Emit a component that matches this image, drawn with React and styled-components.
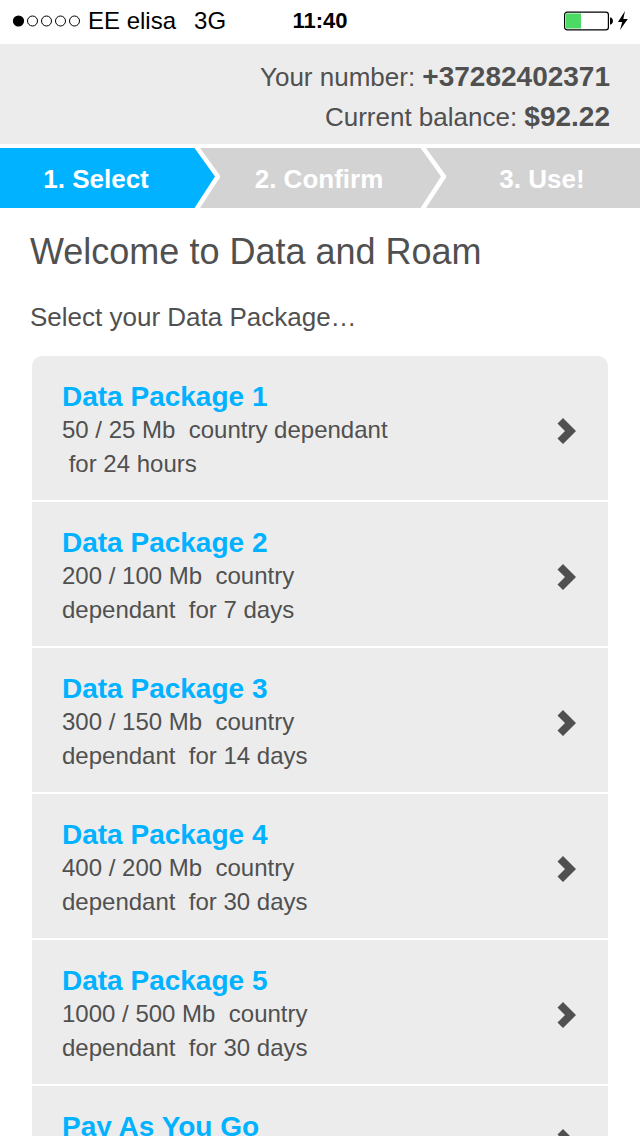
import React from "react";
import styled, { createGlobalStyle } from "styled-components";

const blue = "#00b2ff";
const ink = "#505050";
const panel = "#ececec";
const idle = "#d3d3d3";

const GlobalStyle = createGlobalStyle`
  *, *::before, *::after { box-sizing: border-box; }
  body {
    margin: 0;
    background: #fff;
    color: ${ink};
    font-family: "Liberation Sans", Arial, Helvetica, sans-serif;
  }
  h1, h2, p, ul, ol { margin: 0; padding: 0; font-weight: normal; }
  ul, ol { list-style: none; }
  svg { display: block; flex: none; }
`;

const Screen = styled.div`
  height: 100vh;
  overflow: hidden;
`;

const StatusBar = styled.div`
  display: grid;
  grid-template-columns: 1fr auto 1fr;
  align-items: center;
  height: 44px;
  padding: 0 12px 3px;
  color: #000;
  font-size: 24px;
  line-height: 40px;
`;

const Carrier = styled.div`
  display: flex;
  align-items: center;
  gap: 8px;
`;

const Network = styled.span`
  padding-left: 10px;
`;

const Clock = styled.time`
  font-size: 22px;
  font-weight: bold;
`;

const Power = styled.div`
  display: flex;
  justify-content: flex-end;
`;

const Account = styled.header`
  padding: 13px 30px 7px;
  background: ${panel};
  font-size: 26px;
  line-height: 40px;
  text-align: right;

  strong {
    font-size: 28px;
  }
`;

const Steps = styled.ol`
  display: flex;
  margin-top: 4px;
  background: ${idle};
`;

const Step = styled.li`
  display: flex;
  flex: ${(p) => p.$grow} 1 0;
`;

const StepLabel = styled.span`
  flex: 1;
  padding: 2px 2px 0 0;
  background: ${(p) => (p.$active ? blue : idle)};
  color: #fff;
  font-size: 26px;
  font-weight: bold;
  line-height: 58px;
  text-align: center;
`;

const Main = styled.main`
  padding: 20px 30px 0;
`;

const Title = styled.h1`
  font-size: 36px;
  line-height: 48px;
`;

const Lead = styled.p`
  margin-top: 21px;
  font-size: 26px;
  line-height: 40px;
`;

const PackageList = styled.ul`
  display: flex;
  flex-direction: column;
  gap: 2px;
  margin: 19px 2px 0;
  border-radius: 10px;
  overflow: hidden;
`;

const PackageLink = styled.a`
  display: flex;
  align-items: center;
  justify-content: space-between;
  min-height: 106px;
  padding: 25px 32px 19px 30px;
  background: ${panel};
  color: inherit;
  text-decoration: none;
`;

const PackageText = styled.div`
  align-self: flex-start;
  max-width: 340px;
  font-size: 24px;
  line-height: 34px;
`;

const PackageName = styled.h2`
  color: ${blue};
  font-size: 28px;
  font-weight: bold;
  line-height: 32px;
`;

const packages = [
  { name: "Data Package 1", detail: "50 / 25 Mb \u00a0country dependant \u00a0for 24 hours" },
  { name: "Data Package 2", detail: "200 / 100 Mb \u00a0country dependant \u00a0for 7 days" },
  { name: "Data Package 3", detail: "300 / 150 Mb \u00a0country dependant \u00a0for 14 days" },
  { name: "Data Package 4", detail: "400 / 200 Mb \u00a0country dependant \u00a0for 30 days" },
  { name: "Data Package 5", detail: "1000 / 500 Mb \u00a0country dependant \u00a0for 30 days" },
  { name: "Pay As You Go" },
];

const SignalDots = () => (
  <svg width="68" height="12" viewBox="0 0 68 12" aria-hidden="true">
    <circle cx="6.5" cy="6" r="5.6" fill="#000" />
    {[20.5, 34.5, 48.5, 62.5].map((x) => (
      <circle key={x} cx={x} cy="6" r="5" fill="none" stroke="#000" />
    ))}
  </svg>
);

const Battery = () => (
  <svg width="64" height="20" viewBox="0 0 64 20" aria-hidden="true">
    <rect x="0.6" y="1.1" width="43.8" height="17.8" rx="2.6" fill="#fff" stroke="#000" strokeWidth="1.2" />
    <rect x="2" y="2.500" width="15" height="15" fill="#4cd964" />
    <path d="M46 6.500h1q2 1 2 3.500t-2 3.500h-1z" fill="#000" />
    <path d="M61 0L54 11h4.200L56 19L63.800 8h-4.500z" fill="#000" />
  </svg>
);

const StepArrow = ({ active }) => (
  <svg width="26" height="60" viewBox="0 0 26 60" aria-hidden="true">
    <path d="M0 0h26v60H0z" fill={idle} />
    <path d="M0 0h2L22 28.500L2 60H0z" fill={active ? blue : idle} />
    <path d="M0.500 0H6L26 27.500v2L6 60H0.500L21 28.500z" fill="#fff" />
  </svg>
);

const Chevron = () => (
  <svg width="19" height="26" viewBox="0 0 19 26" aria-hidden="true">
    <path d="M6 0L19 13L6 26L0.500 20.500L8 13L0.500 5.500z" fill={ink} />
  </svg>
);

export default function App() {
  return (
    <Screen>
      <GlobalStyle />
      <StatusBar>
        <Carrier>
          <SignalDots />
          <span>EE elisa</span>
          <Network>3G</Network>
        </Carrier>
        <Clock>11:40</Clock>
        <Power>
          <Battery />
        </Power>
      </StatusBar>
      <Account>
        <p>
          Your number: <strong>+37282402371</strong>
        </p>
        <p>
          Current balance: <strong>$92.22</strong>
        </p>
      </Account>
      <Steps>
        <Step $grow={220} aria-current="step">
          <StepLabel $active>1. Select</StepLabel>
          <StepArrow active />
        </Step>
        <Step $grow={226}>
          <StepLabel>2. Confirm</StepLabel>
          <StepArrow />
        </Step>
        <Step $grow={194}>
          <StepLabel>3. Use!</StepLabel>
        </Step>
      </Steps>
      <Main>
        <Title>Welcome to Data and Roam</Title>
        <Lead>Select your Data Package…</Lead>
        <PackageList>
          {packages.map(({ name, detail }) => (
            <li key={name}>
              <PackageLink href="#">
                <PackageText>
                  <PackageName>{name}</PackageName>
                  {detail && <p>{detail}</p>}
                </PackageText>
                <Chevron />
              </PackageLink>
            </li>
          ))}
        </PackageList>
      </Main>
    </Screen>
  );
}
